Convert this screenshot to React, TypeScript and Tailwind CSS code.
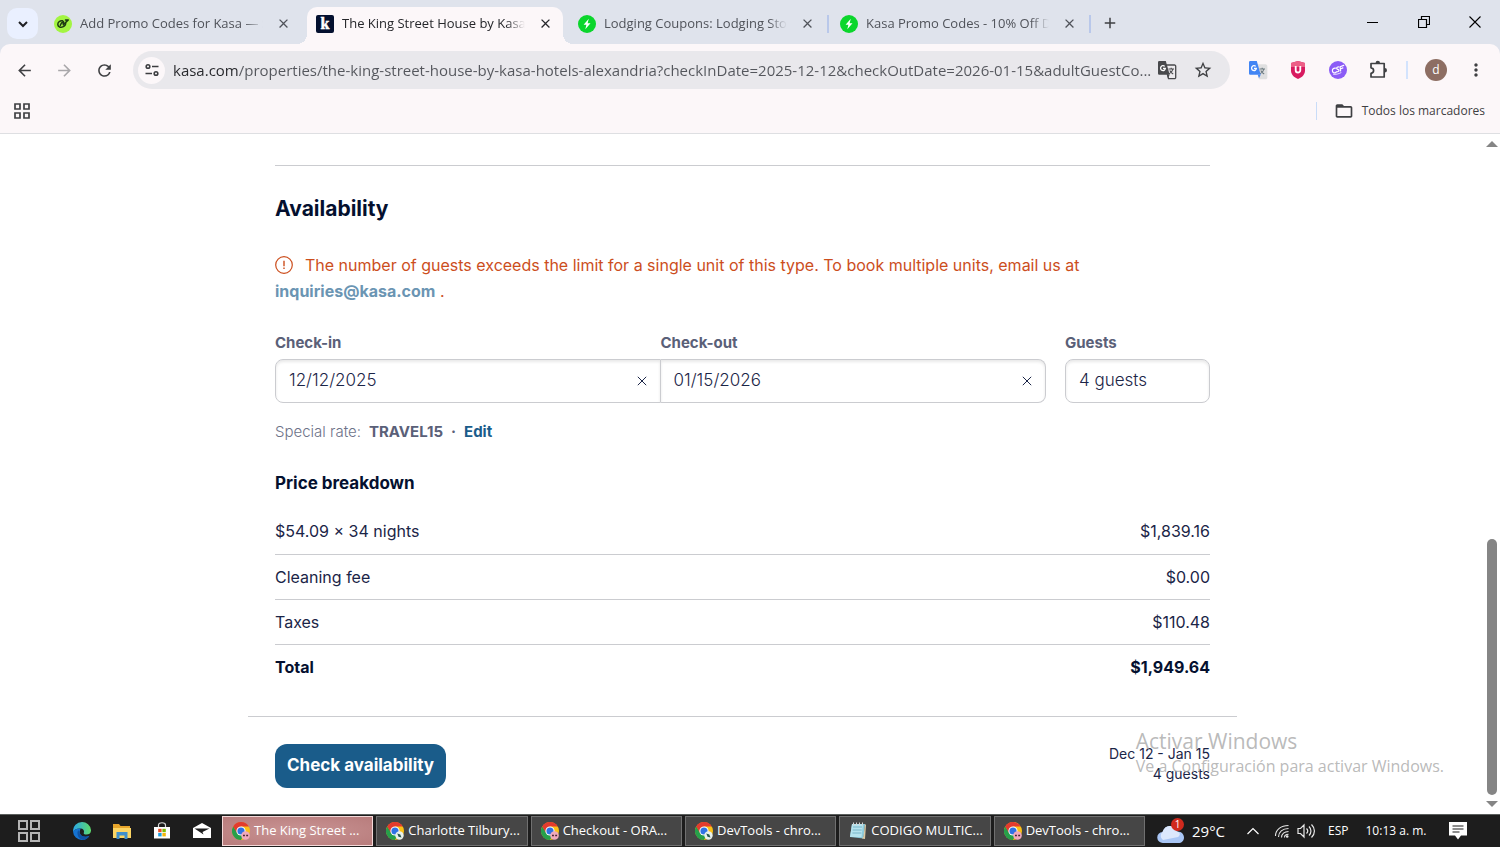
import type { ReactNode } from 'react';
import {
  MdArrowBack,
  MdArrowForward,
  MdRefresh,
  MdStarBorder,
  MdMoreVert,
  MdClose,
  MdAdd,
  MdFolderOpen,
} from 'react-icons/md';

function CsrGlyph({ disc, ink }: { disc: string; ink: string }) {
  return (
    <svg viewBox="0 0 18 18" className="size-[18px] shrink-0" aria-hidden="true">
      <circle cx="9" cy="9" r="9" fill={disc} />
      <g fill="none" stroke={ink} strokeWidth="1.2" strokeLinecap="round" strokeLinejoin="round">
        <path d="M6.400 7.200C4.600 6.900 3.200 8.200 3.400 9.900c.2 1.900 2 2.400 3.400 1.500" />
        <path d="M10 6c-1.500-.2-2.500.5-2.300 1.500.3.900 2.200.8 2.300 1.900 0 1-1.300 1.500-2.700 1.400" />
        <path d="M11.600 9.900l-.5-4.200 3.600-1.300M11.300 8l2.600-1.100" />
        <path d="M4.500 13.300c2 .4 5.500-.4 7.500-1.600" strokeWidth=".8" />
      </g>
    </svg>
  );
}

function LeafFavicon() {
  return (
    <svg viewBox="0 0 18 18" className="size-[18px] shrink-0" aria-hidden="true">
      <circle cx="9" cy="9" r="9" fill="#a3f542" />
      <g fill="none" stroke="#1d3b12" strokeWidth="1.500" strokeLinecap="round" strokeLinejoin="round">
        <path d="M8.500 5.800C5.600 5.500 3.700 7.400 3.800 9.600c.1 2.400 2.900 3.200 5 2.300 1.700-.7 2.900-2.100 2.900-3.800" />
        <path d="M6.300 10.200c.5-1.600 1.700-3 3.200-3.700l-.2 3.200 5-4.800-2.800.2" />
      </g>
    </svg>
  );
}

function KasaFavicon() {
  return (
    <svg viewBox="0 0 18 18" className="size-[18px] shrink-0" aria-hidden="true">
      <rect width="18" height="18" rx="2" fill="#04102f" />
      <text x="9" y="14" textAnchor="middle" fontFamily="Liberation Serif, serif" fontWeight="bold" fontSize="16" fill="#fff" stroke="#fff" strokeWidth=".5">
        k
      </text>
    </svg>
  );
}

function BoltFavicon() {
  return (
    <svg viewBox="0 0 18 18" className="size-[18px] shrink-0" aria-hidden="true">
      <circle cx="9" cy="9" r="9" fill="#0bd62c" />
      <path d="M10.800 3.800 5.600 9.800h2.800L7.300 14.200l5.200-6h-2.900z" fill="#fff" />
    </svg>
  );
}

function TuneIcon() {
  return (
    <svg viewBox="0 0 16 16" className="size-4" fill="none" stroke="#3c3d40" strokeWidth="1.600" aria-hidden="true">
      <circle cx="4" cy="4.500" r="1.800" />
      <path d="M8 4.500h6.500M1.500 11.500H8" />
      <circle cx="12" cy="11.500" r="1.800" />
    </svg>
  );
}

function TranslateIcon({ back, front, glyph, edge }: { back: string; front: string; glyph: string; edge: string }) {
  return (
    <svg viewBox="0 0 20 20" className="size-5" aria-hidden="true">
      <path d="M8.500 5h9a1.200 1.200 0 0 1 1.200 1.200v11.300a1.200 1.200 0 0 1-1.200 1.200h-6z" fill={back} stroke={edge} strokeWidth="1.300" />
      <path d="M11.500 9h5.500M14.200 7.800V9M16 9c-.5 2.200-2 3.800-4 4.800M12.800 10.500c.8 1.600 2 2.800 3.400 3.500" fill="none" stroke={glyph} strokeWidth="1.100" />
      <path d="M2.200 1h6.600l3.900 13.800H2.200A1.200 1.200 0 0 1 1 13.600V2.200A1.200 1.200 0 0 1 2.200 1z" fill={front} />
      <path d="M9.700 14.800h3l-1.700 3.500z" fill={front} />
      <path d="M7.700 6.400A2.400 2.400 0 1 0 8.400 8.300H6" fill="none" stroke="#fff" strokeWidth="1.300" />
    </svg>
  );
}

function ShieldIcon() {
  return (
    <svg viewBox="0 0 18 20" className="h-5 w-[18px]" aria-hidden="true">
      <path d="M9 1l7 2v7.500c0 4-3 6.900-7 8.500-4-1.600-7-4.500-7-8.500V3z" fill="#d81b60" />
      <path d="M9 1l7 2v4H2V3z" fill="#ec5f87" />
      <path d="M6.700 6v4.200a2.300 2.300 0 0 0 4.600 0V6" fill="none" stroke="#fff" strokeWidth="1.800" />
    </svg>
  );
}

function PuzzleIcon() {
  return (
    <svg viewBox="0 0 20 20" className="size-5" aria-hidden="true">
      <path
        d="M3 3.500h13.200v13.500H3v-3.600c1.600-.2 2.600-1.300 2.600-2.800S4.600 8 3 7.800z"
        fill="none"
        stroke="#3f4043"
        strokeWidth="1.700"
        strokeLinejoin="round"
      />
      <path d="M7.600 3a2.200 2.200 0 0 1 4.400 0zM16.800 8a2.200 2.200 0 0 1 0 4.400z" fill="#3f4043" />
    </svg>
  );
}

function AppsIcon() {
  return (
    <svg viewBox="0 0 16 16" className="size-4" fill="none" stroke="#3f4043" strokeWidth="1.700" aria-hidden="true">
      <path d="M1 1h5v5H1zM10 1h5v5h-5zM1 10h5v5H1zM10 10h5v5h-5z" />
    </svg>
  );
}

type TabInfo = { title: string; icon: ReactNode; active?: boolean; divider?: boolean };

const tabs: TabInfo[] = [
  { title: 'Add Promo Codes for Kasa — Sim', icon: <LeafFavicon /> },
  { title: 'The King Street House by Kasa | Al', icon: <KasaFavicon />, active: true },
  { title: 'Lodging Coupons: Lodging Store', icon: <BoltFavicon />, divider: true },
  { title: 'Kasa Promo Codes - 10% Off Dec', icon: <BoltFavicon />, divider: true },
];

function BrowserTab({ title, icon, active, divider }: TabInfo) {
  return (
    <>
      <div
        className={
          active
            ? 'relative flex w-64 items-center rounded-t-[10px] bg-[#fcf7f9] pr-2.5 pb-1 pl-[9px] text-[#26272b]'
            : 'flex w-64 items-center pr-2.5 pb-1 pl-[9px] text-[#50535a]'
        }
      >
        {active && (
          <>
            <span className="absolute bottom-0 -left-2.5 size-2.5 bg-[radial-gradient(circle_at_top_left,transparent_10px,#fcf7f9_10px)]" />
            <span className="absolute -right-2.5 bottom-0 size-2.5 bg-[radial-gradient(circle_at_top_right,transparent_10px,#fcf7f9_10px)]" />
          </>
        )}
        {icon}
        <a
          href="#tab"
          className="ml-2 flex-1 overflow-hidden text-[13px] whitespace-nowrap [mask-image:linear-gradient(to_right,black_90%,transparent)]"
        >
          {title}
        </a>
        <button type="button" aria-label="Close tab" className="ml-3 flex size-4 items-center justify-center">
          <MdClose className="size-[15px]" />
        </button>
      </div>
      <span className={divider ? 'mx-[2px] mb-1 h-[18px] w-[2px] self-center bg-[#b9c8ea]' : 'w-1.5'} />
    </>
  );
}

function BrowserChrome() {
  return (
    <header className="bg-[#dfe3ec] font-['Open_Sans','Noto_Sans',sans-serif]">
      <div className="flex h-11 pt-[7px]">
        <button type="button" aria-label="Search tabs" className="mt-px mr-[7px] ml-[7px] flex size-[31px] items-center justify-center rounded-[10px] bg-[#eaf0ff]">
          <svg viewBox="0 0 12 8" className="h-2 w-3" fill="none" stroke="#1f2023" strokeWidth="2" aria-hidden="true">
            <path d="M2 2l4 4 4-4" />
          </svg>
        </button>
        <div className="flex h-[37px] items-stretch">
          {tabs.map((tab) => (
            <BrowserTab key={tab.title} {...tab} />
          ))}
        </div>
        <button type="button" aria-label="New tab" className="mt-0.5 ml-[3px] flex size-7 items-center justify-center text-[#3f4043]">
          <MdAdd className="size-[18px]" />
        </button>
        <div className="-mt-[7px] ml-auto flex h-11 items-center">
          <button type="button" aria-label="Minimize" className="flex h-full w-[51px] items-center justify-center">
            <span className="mt-px h-px w-[11px] bg-black" />
          </button>
          <button type="button" aria-label="Restore" className="flex h-full w-[51px] items-center justify-center">
            <svg viewBox="0 0 12 12" className="size-3" fill="none" stroke="#000" strokeWidth="1.200" aria-hidden="true">
              <path d="M.5 3.500h8v8h-8zM3.500 3V.5h8v8H9" />
            </svg>
          </button>
          <button type="button" aria-label="Close" className="flex h-full w-[51px] items-center justify-center">
            <svg viewBox="0 0 12 12" className="size-3" fill="none" stroke="#000" strokeWidth="1.100" aria-hidden="true">
              <path d="M.5.5l11 11M11.500.5l-11 11" />
            </svg>
          </button>
        </div>
      </div>

      <div className="rounded-t-[10px] border-b border-[#dedfe2] bg-[#fcf7f9]">
        <div className="flex h-[52px] items-center pl-1 text-[#3f4043]">
          <button type="button" aria-label="Back" className="flex w-10 justify-center">
            <MdArrowBack className="size-[19px]" />
          </button>
          <button type="button" aria-label="Forward" className="flex w-10 justify-center text-[#a9a7aa]">
            <MdArrowForward className="size-[19px]" />
          </button>
          <button type="button" aria-label="Reload" className="flex w-10 justify-center">
            <MdRefresh className="size-[19px]" />
          </button>
          <div className="ml-[9px] flex h-[38px] flex-1 items-center rounded-full bg-[#e9e8ec] pl-[5px]">
            <button type="button" aria-label="Site information" className="flex size-[27px] items-center justify-center rounded-full bg-[#fcf7f9]">
              <TuneIcon />
            </button>
            <input
              type="text"
              aria-label="Address"
              readOnly
              value="kasa.com/properties/the-king-street-house-by-kasa-hotels-alexandria?checkInDate=2025-12-12&checkOutDate=2026-01-15&adultGuestCo..."
              className="ml-2 min-w-0 flex-1 bg-[linear-gradient(to_right,#26272b_65px,#54565c_65px)] bg-clip-text text-[15px] text-transparent outline-none"
            />
            <button type="button" aria-label="Translate" className="ml-px flex size-6 items-center justify-center">
              <TranslateIcon back="#eceaed" front="#48494c" glyph="#48494c" edge="#48494c" />
            </button>
            <button type="button" aria-label="Bookmark" className="mr-[15px] ml-3 flex size-6 items-center justify-center">
              <MdStarBorder className="size-5" />
            </button>
          </div>
          <div className="ml-2 flex items-center">
            <button type="button" aria-label="Google Translate" className="flex w-10 justify-center">
              <TranslateIcon back="#dfdfe0" front="#4285f4" glyph="#6c7a80" edge="#dfdfe0" />
            </button>
            <button type="button" aria-label="Shield" className="flex w-10 justify-center">
              <ShieldIcon />
            </button>
            <button type="button" aria-label="Coupons" className="flex w-10 justify-center">
              <CsrGlyph disc="#8b5cf6" ink="#fff" />
            </button>
            <button type="button" aria-label="Extensions" className="flex w-10 justify-center">
              <PuzzleIcon />
            </button>
            <span className="ml-2 h-[18px] w-[2px] bg-[#d3e3fd]" />
            <button type="button" aria-label="Profile" className="ml-[17px] flex size-[22px] items-center justify-center rounded-full bg-[#8d6e63] text-[12px] text-white">
              d
            </button>
            <button type="button" aria-label="Menu" className="ml-[13px] flex w-10 justify-center pr-2">
              <MdMoreVert className="size-5" />
            </button>
          </div>
        </div>
        <div className="flex h-[37px] items-center pr-[15px] pb-[8px] pl-3.5">
          <button type="button" aria-label="Apps">
            <AppsIcon />
          </button>
          <span className="ml-auto h-[18px] w-px bg-[#c9dcf8]" />
          <button type="button" className="ml-[17px] flex items-center gap-2 text-[12px] text-[#3f4043]">
            <MdFolderOpen className="size-5" />
            Todos los marcadores
          </button>
        </div>
      </div>
    </header>
  );
}

function ClearIcon() {
  return (
    <svg viewBox="0 0 10 10" className="size-2.5" fill="none" stroke="#1b2547" strokeWidth="1" aria-hidden="true">
      <path d="M.8.8l8.400 8.400M9.200.8L.8 9.200" />
    </svg>
  );
}

function DateField({ id, label, value, side }: { id: string; label: string; value: string; side: 'left' | 'right' }) {
  return (
    <div className="flex-1">
      <label htmlFor={id} className="block text-[15px] leading-5 font-bold text-[#5a6078]">
        {label}
      </label>
      <div
        className={
          side === 'left'
            ? 'mt-1.5 flex h-11 items-center rounded-l-lg border border-[#cbccd0] pr-[13px] pl-[13px] shadow-[inset_0_2px_3px_rgba(0,0,0,0.09)]'
            : 'mt-1.5 flex h-11 items-center rounded-r-lg border border-l-0 border-[#cbccd0] pr-[13px] pl-[13px] shadow-[inset_0_2px_3px_rgba(0,0,0,0.09)]'
        }
      >
        <input id={id} type="text" defaultValue={value} className="min-w-0 flex-1 bg-transparent text-[17px] text-[#1b2547] outline-none" />
        <button type="button" aria-label={`Clear ${label}`}>
          <ClearIcon />
        </button>
      </div>
    </div>
  );
}

const charges = [
  { label: '$54.09 × 34 nights', amount: '$1,839.16' },
  { label: 'Cleaning fee', amount: '$0.00' },
  { label: 'Taxes', amount: '$110.48' },
];

function BookingPage() {
  return (
    <main className="flex-1 font-['Inter','Lato',sans-serif] text-[17px] font-light text-[#1b2547]">
      <div className="mx-auto max-w-[989px]">
        <div className="px-[27px] pt-[31px]">
          <hr className="border-t border-[#cbccd0]" />
          <h2 className="mt-[29px] text-[21px] leading-7 font-bold text-[#04102f]">Availability</h2>
          <p className="mt-[29px] text-[16px] leading-[26px] font-normal text-[#cc4e1d]">
            <svg viewBox="0 0 18 18" className="mr-3 inline size-[18px] align-[-3px]" fill="none" stroke="#cc4e1d" strokeWidth="1.200" aria-hidden="true">
              <circle cx="9" cy="9" r="8.300" />
              <path d="M9 4.800v5.400M9 11.600v1.500" strokeWidth="1.400" />
            </svg>
            The number of guests exceeds the limit for a single unit of this type. To book multiple units, email us at{' '}
            <a href="mailto:inquiries@kasa.com" className="font-bold text-[#6b95b3]">
              inquiries@kasa.com
            </a>{' '}
            .
          </p>

          <form className="mt-[29px] flex gap-[19px]">
            <div className="flex flex-1">
              <DateField id="check-in" label="Check-in" value="12/12/2025" side="left" />
              <DateField id="check-out" label="Check-out" value="01/15/2026" side="right" />
            </div>
            <div className="w-[145px]">
              <label htmlFor="guests" className="block text-[15px] leading-5 font-bold text-[#5a6078]">
                Guests
              </label>
              <select
                id="guests"
                className="mt-1.5 h-11 w-full appearance-none rounded-lg border border-[#cbccd0] bg-transparent px-[13px] shadow-[inset_0_2px_3px_rgba(0,0,0,0.09)]"
              >
                <option>4 guests</option>
              </select>
            </div>
          </form>

          <p className="mt-[19px] flex items-baseline gap-2 text-[15px] leading-5 text-[#6d7288]">
            Special rate: <strong className="font-bold text-[#5a6078]">TRAVEL15</strong>
            <span className="font-bold text-[#5a6078]">·</span>
            <a href="#edit" className="font-bold text-[#1a5c8a]">
              Edit
            </a>
          </p>

          <h3 className="mt-[31px] text-[17px] leading-5 font-bold text-[#04102f]">Price breakdown</h3>
          <table className="mt-4 w-full text-[16px]">
            <tbody>
              {charges.map((charge) => (
                <tr key={charge.label} className="h-[45px] border-b border-[#cbccd0] font-normal">
                  <th scope="row" className="text-left font-normal">
                    {charge.label}
                  </th>
                  <td className="text-right">{charge.amount}</td>
                </tr>
              ))}
              <tr className="h-[45px] font-bold text-[#04102f]">
                <th scope="row" className="text-left">
                  Total
                </th>
                <td className="text-right">{'$1,949.64'}</td>
              </tr>
            </tbody>
          </table>
        </div>

        <footer className="mt-[27px] flex items-start justify-between border-t border-[#cbccd0] px-[27px] pt-[27px] pb-[26px]">
          <button type="button" className="h-11 rounded-xl bg-[#1a5c8a] px-3 font-bold text-white">
            Check availability
          </button>
          <p className="text-right text-[14px] leading-5 font-normal">
            Dec 12 - Jan 15
            <br />4 guests
          </p>
        </footer>
      </div>
    </main>
  );
}

function PageScrollbar() {
  return (
    <div className="flex w-[15px] flex-col items-center py-[7px] pr-px" aria-hidden="true">
      <svg viewBox="0 0 12 6" className="h-1.5 w-3" fill="#858585">
        <path d="M6 0l6 6H0z" />
      </svg>
      <span className="flex-[392]" />
      <span className="w-2.5 flex-[256] rounded-full bg-[#858585]" />
      <svg viewBox="0 0 12 6" className="mt-[6px] h-1.5 w-3" fill="#858585">
        <path d="M6 6l6-6H0z" />
      </svg>
    </div>
  );
}

function ChromeLogo({ badge }: { badge: 'pink' | 'green' }) {
  return (
    <svg viewBox="0 0 18 18" className="size-[18px] shrink-0" aria-hidden="true">
      <circle cx="9" cy="9" r="9" fill="#fbc116" />
      <path d="M9 9H4.500L1.200 4.500A9 9 0 0 0 9 18l3-6z" fill="#269f4a" />
      <path d="M9 4.500h7.800A9 9 0 0 0 1.200 4.500L5 11z" fill="#e33b2e" />
      <circle cx="9" cy="9" r="4.600" fill="#fff" />
      <circle cx="9" cy="9" r="3.600" fill="#2f72e4" />
      {badge === 'pink' ? (
        <>
          <circle cx="13.500" cy="13.500" r="4.300" fill="#f0a9bd" />
          <path d="M11 13.500h1.900M14.200 13.500h1.900" stroke="#4a2532" strokeWidth="1.600" />
        </>
      ) : (
        <>
          <circle cx="13.500" cy="13.500" r="4.200" fill="#e8f1ee" />
          <path d="M11.300 11.500l3 1 1.200 3-3-.8z" fill="#28584d" />
        </>
      )}
    </svg>
  );
}

function NotepadIcon() {
  return (
    <svg viewBox="0 0 18 18" className="size-[18px] shrink-0" aria-hidden="true">
      <path d="M3 2h13l-1.500 14.500L1 15z" fill="#8ccbdc" />
      <path d="M3 2h11l-1.500 13L1 15z" fill="#b5e3ee" />
      <path d="M4 5h9M3.700 8h9M3.400 11h9" stroke="#78b5c8" />
      <path d="M4.500.5v3M7.500.5v3M10.500.5v3M13.500.5v3" stroke="#d5d5d5" />
      <path d="M16 2l1 1-1 14-3-.5 1.500-2z" fill="#d9c9a4" />
    </svg>
  );
}

const windows: { title: string; icon: ReactNode; active?: boolean }[] = [
  { title: 'The King Street ...', icon: <ChromeLogo badge="pink" />, active: true },
  { title: 'Charlotte Tilbury...', icon: <ChromeLogo badge="green" /> },
  { title: 'Checkout - ORA...', icon: <ChromeLogo badge="pink" /> },
  { title: 'DevTools - chro...', icon: <ChromeLogo badge="green" /> },
  { title: 'CODIGO MULTIC...', icon: <NotepadIcon /> },
  { title: 'DevTools - chro...', icon: <ChromeLogo badge="pink" /> },
];

function Taskbar() {
  return (
    <div className="flex h-[33px] items-center border-t border-[#5b5f5d] bg-[#1d1d1d] font-['Open_Sans','Noto_Sans',sans-serif] text-[13px] text-white">
      <div className="flex w-[222px] items-center">
        <button type="button" aria-label="Task view" className="flex w-[58px] justify-center">
          <svg viewBox="0 0 24 24" className="size-6" fill="none" stroke="#b5b5b5" strokeWidth="2" aria-hidden="true">
            <path d="M2 2h8v8H2zM14 2h8v8h-8zM2 14h8v8H2zM14 14h8v8h-8z" />
          </svg>
        </button>
        <button type="button" aria-label="Edge" className="ml-1 flex w-10 justify-center">
          <svg viewBox="0 0 18 18" className="size-[18px]" aria-hidden="true">
            <defs>
              <linearGradient id="edge-top" x1="0" x2="1">
                <stop offset="0" stopColor="#2aa7e8" />
                <stop offset="1" stopColor="#5edb6a" />
              </linearGradient>
            </defs>
            <path d="M9 0a9 9 0 0 1 9 8c.2 3-2 4.600-4.600 4.600-2 0-3-.9-2.600-1.900.8-2-.5-4-3-4.200C4 6.200 1 8.200 0 9.500A9 9 0 0 1 9 0z" fill="url(#edge-top)" />
            <path d="M7.800 6.500C3.600 6.200 0 8.600 0 9.500A9 9 0 0 0 9 18c3.500 0 6-1.700 7.400-4.200-4.600 2.300-9.200.5-9.700-3.300-.1-1.500.3-2.700 1.100-4z" fill="#1573d1" />
            <path d="M5.500 8C3 11 5 17.500 10.500 17.900c2.600-.3 4.700-1.800 5.900-4.100C11 16.200 6.500 13.500 5.500 8z" fill="#0f52a4" />
          </svg>
        </button>
        <button type="button" aria-label="File Explorer" className="flex w-10 justify-center">
          <svg viewBox="0 0 18 16" className="h-4 w-[18px]" aria-hidden="true">
            <path d="M0 1h6l1.500 2H17v4H0z" fill="#e7a52b" />
            <path d="M0 5h18v10H0z" fill="#fbd463" />
            <path d="M3.500 9h11v7h-3v-3.500h-5V16h-3z" fill="#3f8fcb" />
          </svg>
        </button>
        <button type="button" aria-label="Microsoft Store" className="flex w-10 justify-center">
          <svg viewBox="0 0 18 18" className="size-[18px]" aria-hidden="true">
            <path d="M5.500 5V3c0-3 7-3 7 0v2" fill="none" stroke="#d8d8d8" strokeWidth="1.200" />
            <path d="M1 5h16v11.500H1z" fill="#fff" />
            <path d="M5.200 6.800h3.400v3.400H5.200z" fill="#e94f26" />
            <path d="M9.400 6.800h3.400v3.400H9.400z" fill="#7db904" />
            <path d="M5.200 11h3.400v3.400H5.200z" fill="#1b9fe4" />
            <path d="M9.400 11h3.400v3.400H9.400z" fill="#f5b60a" />
          </svg>
        </button>
        <button type="button" aria-label="Mail" className="flex w-10 justify-center">
          <svg viewBox="0 0 18 16" className="h-4 w-[18px]" aria-hidden="true">
            <path d="M0 5l9-5 9 5v10H0z" fill="#fff" />
            <path d="M1.500 5.500h15L9.500 9l1 2.500z" fill="#1d1d1d" />
          </svg>
        </button>
      </div>

      <nav className="flex flex-1 gap-[3px]">
        {windows.map((item, index) => (
          <button
            key={index}
            type="button"
            className={
              item.active
                ? 'flex h-[30px] flex-1 items-center gap-1 border border-[#f4d9d9] bg-radial from-[#c99494] to-[#b87c7c] pl-[9px] text-left whitespace-nowrap'
                : 'flex h-[30px] flex-1 items-center gap-1 border border-[#707070] bg-[#464646] pl-[9px] text-left whitespace-nowrap'
            }
          >
            {item.icon}
            {item.title}
          </button>
        ))}
      </nav>

      <div className="flex w-[355px] items-center pl-3">
        <button type="button" className="flex items-center gap-2 text-[15px]">
          <svg viewBox="0 0 27 26" className="h-[26px] w-[27px]" aria-hidden="true">
            <path d="M6 25a5.500 5.500 0 0 1-.5-11C7 9.500 10 7.500 13.500 8c3.500.3 5.500 2.500 6.200 5.500C24 13 27 16 27 19.500S24.500 25 21.500 25z" fill="#a9c6f5" />
            <path d="M6 22a5 5 0 0 1-.5-8C7 9.500 10 7.500 13.500 8c3.500.3 5.500 2.500 6.200 5.500C23 14 24 17 21 19z" fill="#dce8fc" />
            <circle cx="20.500" cy="6.500" r="6.500" fill="#d02a1e" />
            <text x="20.500" y="10" textAnchor="middle" fontSize="10" fill="#fff">
              1
            </text>
          </svg>
          29°C
        </button>
        <button type="button" aria-label="Hidden icons" className="ml-[22px]">
          <svg viewBox="0 0 12 8" className="h-2 w-3" fill="none" stroke="#fff" strokeWidth="1.200" aria-hidden="true">
            <path d="M.5 7L6 1.500 11.500 7" />
          </svg>
        </button>
        <button type="button" aria-label="Network" className="ml-[15px]">
          <svg viewBox="0 0 16 16" className="size-4" fill="none" stroke="#e8e8e8" strokeWidth="1.100" aria-hidden="true">
            <path d="M1.500 13C1.500 6.500 7 2.500 14.500 2.500M4.500 14c0-5 4-8.500 10-8.500M7.500 14.500c0-3.500 3-6 7-6M10.500 14.500c0-2 1.500-3.200 4-3.200" />
            <circle cx="13.200" cy="13.500" r="1.300" fill="#e8e8e8" stroke="none" />
          </svg>
        </button>
        <button type="button" aria-label="Volume" className="ml-[7px]">
          <svg viewBox="0 0 19 16" className="h-4 w-[19px]" fill="none" stroke="#e8e8e8" strokeWidth="1.200" aria-hidden="true">
            <path d="M1 5.500h2.500L7 2v12l-3.500-3.500H1zM9.500 5.500c1.500 1.500 1.500 3.500 0 5M12 3.500c2.600 2.600 2.600 6.400 0 9M14.500 1.500c3.900 3.900 3.900 9.100 0 13" />
          </svg>
        </button>
        <span className="ml-3 text-[12px]">ESP</span>
        <time className="ml-[17px] text-[12px] whitespace-nowrap">10:13 a. m.</time>
        <button type="button" aria-label="Notifications" className="mr-[33px] ml-auto">
          <svg viewBox="0 0 18 18" className="size-[18px]" aria-hidden="true">
            <path d="M0 0h18v13.500h-6L9 17.500l-3-4H0z" fill="#fff" />
            <path d="M3.500 4h11M3.500 7h11M3.500 10h7" stroke="#1d1d1d" strokeWidth="1.100" />
          </svg>
        </button>
      </div>
    </div>
  );
}

export default function App() {
  return (
    <div className="relative flex min-h-screen flex-col bg-white">
      <BrowserChrome />
      <div className="flex flex-1">
        <BookingPage />
        <PageScrollbar />
      </div>
      <Taskbar />
      <aside className="pointer-events-none absolute right-14 bottom-[70px] font-['Open_Sans','Noto_Sans',sans-serif] text-[#a8a8a8]/80">
        <p className="text-[21px] leading-7">Activar Windows</p>
        <p className="text-[16px] leading-[22px]">Ve a Configuración para activar Windows.</p>
      </aside>
    </div>
  );
}
